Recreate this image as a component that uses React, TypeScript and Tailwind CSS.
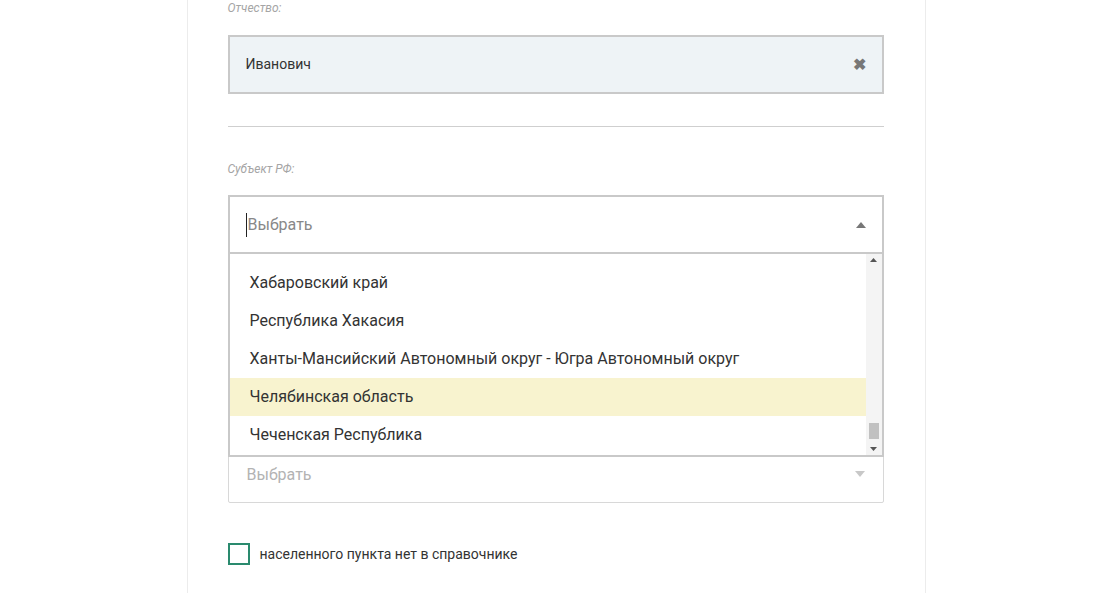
export default function App() {
  const items = ["Хабаровский край", "Республика Хакасия", "Ханты-Мансийский Автономный округ - Югра Автономный округ", "Челябинская область", "Чеченская Республика"];
  return (
    <div className="w-[1112px] h-[593px] bg-white overflow-hidden flex justify-center" style={{ fontFamily: "Roboto, 'Noto Sans', sans-serif" }}>
      <div className="w-[739px] h-full border-x border-[#ececec] pl-[40px] pr-[40px]">
        <div className="w-[656px]">
          <div className="text-[12px] italic text-[#a5a5a5] pt-[0px] leading-[16px]">Отчество:</div>
          <div className="mt-[19px] h-[59px] bg-[#eef3f6] border-2 border-[#c9c9c9] flex items-center justify-between px-[16px] text-[14px] text-[#333]">
            <span>Иванович</span>
            <span className="text-[#777] text-[16px] font-bold">✖</span>
          </div>
          <div className="mt-[32px] border-t border-[#cfcfcf]" />
          <div className="mt-[34px] text-[12px] italic text-[#a5a5a5] leading-[16px]">Субъект РФ:</div>
          <div className="relative mt-[18px]">
            <div className="h-[59px] border-2 border-[#c9c9c9] flex items-center justify-between px-[16px] text-[16px] text-[#888]">
              <span className="border-l border-[#222] pl-px">Выбрать</span>
              <svg width="10" height="6" viewBox="0 0 10 6"><path d="M0 6 L5 0 L10 6Z" fill="#777" /></svg>
            </div>
            <div className="absolute left-0 top-[59px] w-full h-[203px] bg-white border-2 border-t-0 border-[#c9c9c9] flex z-10">
              <div className="flex-1 pt-[10px]">
                {items.map((t, i) => (
                  <div key={i} className={`h-[38px] flex items-center pl-[20px] text-[16px] text-[#333] ${i === 3 ? "bg-[#f8f3cf]" : ""}`}>{t}</div>
                ))}
              </div>
              <div className="w-[16px] flex flex-col items-center justify-between py-[4px] bg-[#f4f4f4]">
                <svg width="7" height="4" viewBox="0 0 7 4"><path d="M0 4 L3.5 0 L7 4Z" fill="#555" /></svg>
                <div className="w-[10px] h-[16px] bg-[#c1c1c1] mt-auto mb-[8px]" />
                <svg width="7" height="4" viewBox="0 0 7 4"><path d="M0 0 L3.5 4 L7 0Z" fill="#555" /></svg>
              </div>
            </div>
          </div>
          <div className="mt-[191px] h-[58px] border border-[#d8d8d8] rounded-[2px] flex items-start justify-between px-[18px] pt-[17px] text-[16px] text-[#b3b3b3]">
            <span>Выбрать</span>
            <svg className="mt-[8px]" width="10" height="6" viewBox="0 0 10 6"><path d="M0 0 L5 6 L10 0Z" fill="#c8c8c8" /></svg>
          </div>
          <div className="mt-[40px] flex items-center gap-[10px]">
            <div className="w-[22px] h-[22px] border-2 border-[#2a8a6e]" />
            <span className="text-[14px] text-[#333]">населенного пункта нет в справочнике</span>
          </div>
        </div>
      </div>
    </div>
  );
}
